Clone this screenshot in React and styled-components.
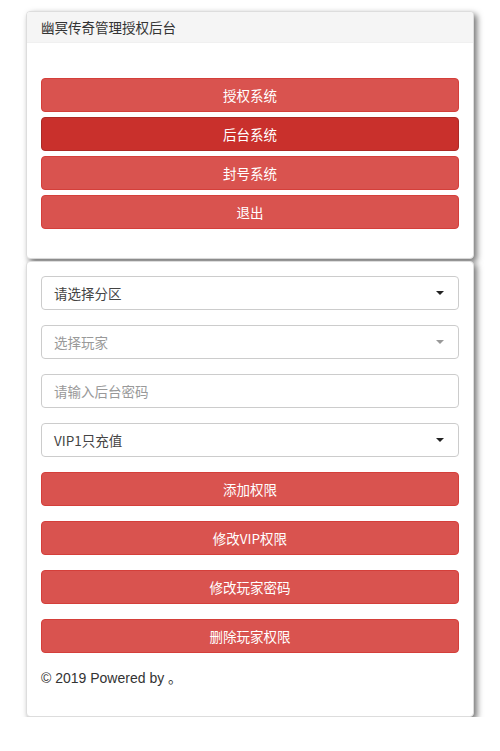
import React from "react";
import styled, { createGlobalStyle } from "styled-components";

const Global = createGlobalStyle`
  html, body { margin: 0; padding: 0; background: #fff; }
  body { font-family: "Liberation Sans", "Noto Sans CJK SC", sans-serif; font-size: 14px; color: #333; }
  * { box-sizing: border-box; }
`;

const Page = styled.div`
  padding: 11px 26px 0 26px;
  display: flex;
  flex-direction: column;
  gap: 2px;
`;

const Card = styled.div`
  background: #fff;
  border: 1px solid #ddd;
  border-radius: 4px;
  box-shadow: 3px 3px 6px rgba(0, 0, 0, 0.55);
  overflow: hidden;
`;

const CardHeader = styled.div`
  background: #f5f5f5;
  border-bottom: 1px solid #f0f0f0;
  height: 31px;
  padding: 0 14px;
  display: flex;
  align-items: center;
  font-family: "Noto Sans CJK SC", sans-serif;
  font-size: 13.5px;
  color: #333;
`;

const MenuBody = styled.div`
  padding: 35px 14px 29px 14px;
  display: flex;
  flex-direction: column;
  gap: 5px;
`;

const FormBody = styled.div`
  padding: 14px 14px 0 14px;
  display: flex;
  flex-direction: column;
  gap: 15px;
`;

const Button = styled.button`
  height: 34px;
  width: 100%;
  border: 1px solid #d43f3a;
  border-radius: 4px;
  background: ${(p) => (p.$active ? "#c9302c" : "#d9534f")};
  border-color: ${(p) => (p.$active ? "#ac2925" : "#d43f3a")};
  color: #fff;
  font-family: "Noto Sans CJK SC", sans-serif;
  font-size: 13.5px;
  display: flex;
  align-items: center;
  justify-content: center;
  padding: 0;
`;

const Field = styled.div`
  height: 34px;
  border: 1px solid #ccc;
  border-radius: 4px;
  padding: 0 12px;
  display: flex;
  align-items: center;
  justify-content: space-between;
  font-family: "Noto Sans CJK SC", sans-serif;
  font-size: 13.5px;
  color: ${(p) => (p.$muted ? "#999" : "#444")};
  background: #fff;
`;

const Caret = styled.span`
  width: 0;
  height: 0;
  border-left: 4px solid transparent;
  border-right: 4px solid transparent;
  border-top: 4px solid ${(p) => (p.$muted ? "#999" : "#222")};
  margin-right: 2px;
`;

const Footer = styled.div`
  padding: 0 0 28px 0;
  line-height: 20px;
  font-family: "Liberation Sans", "Noto Sans CJK SC", sans-serif;
  font-size: 14px;
  color: #333;
`;

export default function App() {
  return (
    <>
      <Global />
      <Page>
        <Card>
          <CardHeader>幽冥传奇管理授权后台</CardHeader>
          <MenuBody>
            <Button>授权系统</Button>
            <Button $active>后台系统</Button>
            <Button>封号系统</Button>
            <Button>退出</Button>
          </MenuBody>
        </Card>
        <Card>
          <FormBody>
            <Field>
              请选择分区
              <Caret />
            </Field>
            <Field $muted>
              选择玩家
              <Caret $muted />
            </Field>
            <Field $muted>请输入后台密码</Field>
            <Field>
              VIP1只充值
              <Caret />
            </Field>
            <Button>添加权限</Button>
            <Button>修改VIP权限</Button>
            <Button>修改玩家密码</Button>
            <Button>删除玩家权限</Button>
            <Footer>© 2019 Powered by 。</Footer>
          </FormBody>
        </Card>
      </Page>
    </>
  );
}
